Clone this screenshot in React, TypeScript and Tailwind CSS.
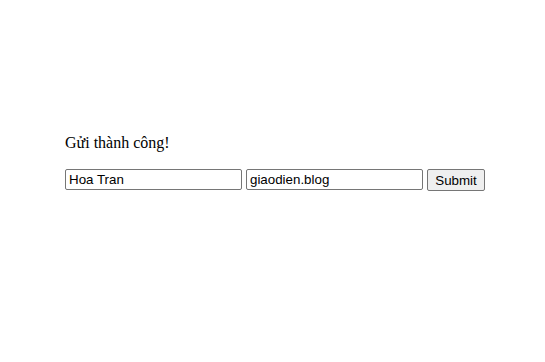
import React from "react";

export default function App() {
  return (
    <div className="w-[545px] h-[362px] bg-white pl-[65px] pt-[134px] font-['Liberation_Serif',serif] text-black">
      <p className="text-[16px] leading-[18px]">Gửi thành công!</p>
      <form className="mt-[17px] flex items-start gap-[4px] font-['Liberation_Sans',Arial,sans-serif] text-[13.333px]" onSubmit={(e) => e.preventDefault()}>
        <input
          type="text"
          defaultValue="Hoa Tran"
          className="w-[177px] h-[21px] border border-[#767676] rounded-[2px] pl-[3px] pr-[3px] leading-[normal] text-black outline-none bg-white"
        />
        <input
          type="text"
          defaultValue="giaodien.blog"
          className="w-[177px] h-[21px] border border-[#767676] rounded-[2px] pl-[3px] pr-[3px] leading-[normal] text-black outline-none bg-white"
        />
        <button
          type="submit"
          className="w-[58px] h-[22px] border border-[#767676] rounded-[2px] bg-[#efefef] text-black leading-[normal] flex items-center justify-center"
        >
          Submit
        </button>
      </form>
    </div>
  );
}
